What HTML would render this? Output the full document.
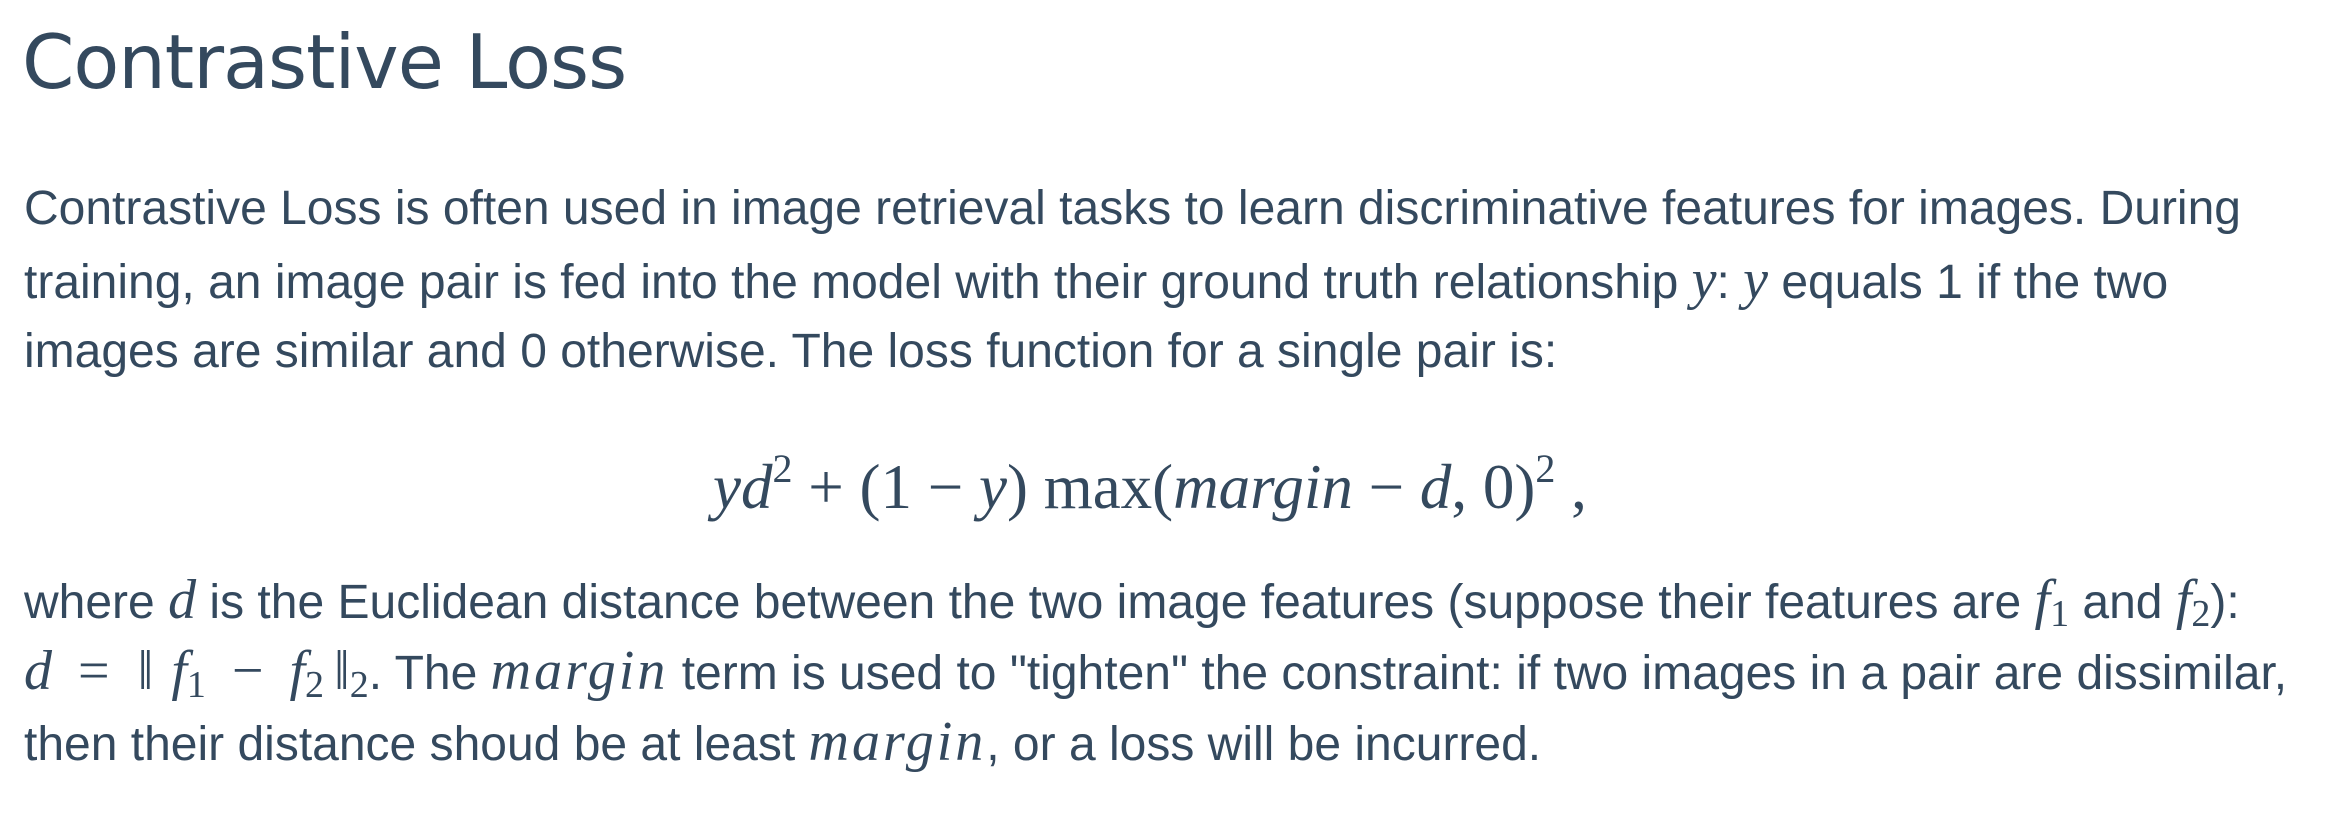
<!DOCTYPE html>
<html><head><meta charset="utf-8"><style>
html,body{margin:0;padding:0;background:#fff;width:2330px;height:821px;overflow:hidden}
body{font-family:"Liberation Sans",Arial,sans-serif;color:#34495e;position:relative}
.l{position:absolute;left:24px;white-space:nowrap;font-size:48px;line-height:40px}
h1{position:absolute;left:22px;top:12px;margin:0;font-weight:normal;font-size:75px;line-height:100px;font-family:"DejaVu Sans","Liberation Sans",sans-serif;letter-spacing:-1px;white-space:nowrap}
.m{font-family:"Liberation Serif",serif;font-style:italic;font-size:56px}
.mg{letter-spacing:3px}
.r{font-family:"Liberation Serif",serif;font-size:56px}
sub{font-family:"Liberation Serif",serif;font-size:38px;vertical-align:-8px;line-height:0}
.f{position:absolute;left:713px;top:452px;white-space:nowrap;font-family:"Liberation Serif",serif;font-size:63px;line-height:70px}
.f i{font-style:italic}
.f sup{font-size:40px;vertical-align:26px;line-height:0}
</style></head><body>
<h1>Contrastive Loss</h1>
<div class="l" style="top:189px">Contrastive Loss is often used in image retrieval tasks to learn discriminative features for images. During</div>
<div class="l" style="top:260px">training, an image pair is fed into the model with their ground truth relationship <span class="m">y</span>: <span class="m">y</span> equals 1 if the two</div>
<div class="l" style="top:332px">images are similar and 0 otherwise. The loss function for a single pair is:</div>
<div class="f"><i>yd</i><sup>2</sup> + (1 − <i>y</i>) max(<i>margin</i> − <i>d</i>, 0)<sup>2</sup> ,</div>
<div class="l" style="top:580px">where <span class="m">d</span> is the Euclidean distance between the two image features (suppose their features are <span class="m">f</span><sub>1</sub> and <span class="m">f</span><sub>2</sub>):</div>
<div class="l" style="top:651px"><span class="m">d</span><span class="r" style="margin:0 28px 0 26px">=</span><span class="r" style="margin-right:18px">‖</span><span class="m">f</span><sub>1</sub><span class="r" style="margin:0 26px">−</span><span class="m">f</span><sub>2</sub><span class="r" style="margin-left:10px">‖</span><sub>2</sub>. The <span class="m mg">margin</span> term is used to "tighten" the constraint: if two images in a pair are dissimilar,</div>
<div class="l" style="top:722px">then their distance shoud be at least <span class="m mg">margin</span>, or a loss will be incurred.</div>
</body></html>
